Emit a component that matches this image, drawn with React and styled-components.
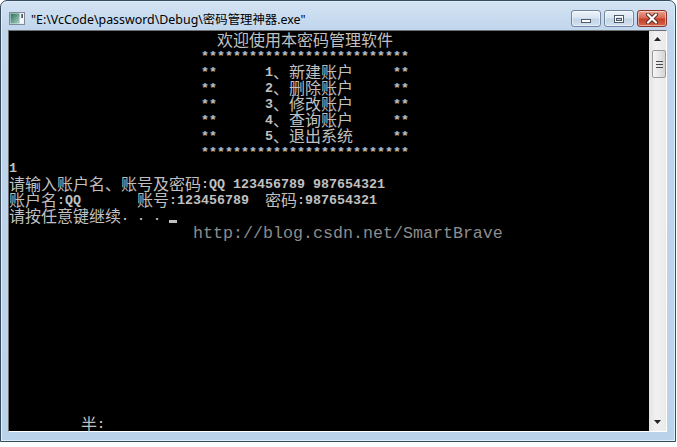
import React from 'react';
import styled, { createGlobalStyle } from 'styled-components';

const GlobalStyle = createGlobalStyle`
    body {
        margin: 0;
        background: #fff;
    }
`;

const Window = styled.div`
    width: 676px;
    height: 442px;
    box-sizing: border-box;
    border: 1px solid #3b4b5e;
    border-radius: 7px 7px 0 0;
    background: linear-gradient(to bottom, #d4e3f3 0, #bfd5ec 30px, #bad2ea 100%);
    box-shadow: inset 0 0 0 1px #d9f1fb;
    display: flex;
    flex-direction: column;
`;

const TitleBar = styled.div`
    height: 29px;
    box-sizing: border-box;
    padding: 9px 8px 0 8px;
    display: flex;
    align-items: flex-start;
    justify-content: space-between;
`;

const TitleGroup = styled.div`
    height: 17px;
    display: flex;
    align-items: center;
    gap: 6px;
`;

const TitleText = styled.span`
    font-family: "Noto Sans", "Noto Sans CJK SC", sans-serif;
    font-size: 12.4px;
    color: #000;
    white-space: pre;
`;

const Buttons = styled.div`
    display: flex;
    gap: 3px;
`;

const CaptionButton = styled.div`
    width: 30px;
    height: 17px;
    box-sizing: border-box;
    border: 1px solid ${p => (p.$close ? '#8d3428' : '#72869f')};
    border-radius: 3px;
    background: ${p => (p.$close
        ? 'linear-gradient(to bottom, #e9a291 0, #d86a55 45%, #c63f2c 55%, #d4654c 100%)'
        : 'linear-gradient(to bottom, #eef4fa 0, #d9e5f2 45%, #c3d4e8 55%, #d3e1f0 100%)')};
    box-shadow: inset 0 0 0 1px rgba(255, 255, 255, 0.45);
    display: flex;
    align-items: center;
    justify-content: center;
`;

const Client = styled.div`
    margin: 0 8px 0 7px;
    border-top: 1px solid #6f6f6f;
    border-left: 1px solid #6f6f6f;
    border-bottom: 1px solid #fff;
    border-right: 1px solid #fff;
    display: flex;
`;

const Console = styled.div`
    position: relative;
    width: 640px;
    height: 400px;
    background: #000;
    color: #c0c0c0;
`;

const Row = styled.div`
    height: 16px;
    line-height: 16px;
    white-space: pre;
    display: flex;
    align-items: flex-start;
`;

// half-width runs sit 3px lower so both fonts share the console baseline
const Run = styled.span`
    display: inline-block;
    box-sizing: border-box;
    height: 16px;
    line-height: ${p => (p.$wide ? 16 : 13)}px;
    padding-top: ${p => (p.$wide ? 0 : 3)}px;
    font-family: ${p => (p.$wide ? '"Noto Sans CJK SC", sans-serif' : '"Liberation Mono", monospace')};
    font-size: ${p => (p.$wide ? '16px' : '13.334px')};
    font-weight: ${p => (p.$wide ? 400 : 700)};
`;

const Cursor = styled.span`
    display: inline-block;
    width: 8px;
    height: 16px;
    box-shadow: inset 0 -3px 0 #c0c0c0;
`;

const Watermark = styled.div`
    position: absolute;
    left: 184px;
    top: 193px;
    font-family: "Liberation Mono", monospace;
    font-size: 16.67px;
    color: #8c8c8c;
    white-space: pre;
`;

const ScrollBar = styled.div`
    width: 17px;
    height: 400px;
    background: linear-gradient(to right, #e4e4e4, #f1f1f1 40%, #eaeaea);
    display: flex;
    flex-direction: column;
    justify-content: space-between;
`;

const ArrowButton = styled.div`
    height: 17px;
    display: flex;
    align-items: center;
    justify-content: center;
`;

const ThumbTrack = styled.div`
    flex: 1;
    padding: 2px 1px 0 3px;
`;

const Thumb = styled.div`
    width: 14px;
    height: 28px;
    box-sizing: border-box;
    border: 1px solid #9a9a9a;
    border-radius: 2px;
    background: linear-gradient(to right, #f6f6f6, #e6e6e6 50%, #d4d4d4);
    display: flex;
    flex-direction: column;
    align-items: center;
    justify-content: center;
    gap: 2px;
`;

const Grip = styled.div`
    width: 7px;
    height: 1px;
    background: #4a4a4a;
`;

const lines = [
    '                          欢迎使用本密码管理软件',
    '                        **************************',
    '                        **      1、新建账户     **',
    '                        **      2、删除账户     **',
    '                        **      3、修改账户     **',
    '                        **      4、查询账户     **',
    '                        **      5、退出系统     **',
    '                        **************************',
    '1',
    '请输入账户名、账号及密码:QQ 123456789 987654321',
    '账户名:QQ       账号:123456789  密码:987654321',
    '请按任意键继续. . . ',
];

const CURSOR_ROW = 11;

// split a line into runs of half-width and full-width characters
const toRuns = text => {
    const runs = [];
    for (const ch of text) {
        const wide = ch.charCodeAt(0) >= 0x2e80;
        const last = runs[runs.length - 1];
        if (last && last.wide === wide) last.text += ch;
        else runs.push({ wide, text: ch });
    }
    return runs;
};

const rows = [...lines];
while (rows.length < 24) rows.push('');
rows.push('         半:');

const ConsoleIcon = () => (
    <svg width="16" height="13" viewBox="0 0 16 13">
        <defs>
            <linearGradient id="ci" x1="0" y1="0" x2="1" y2="1">
                <stop offset="0" stopColor="#2c6e57" />
                <stop offset="1" stopColor="#a9d4c8" />
            </linearGradient>
        </defs>
        <rect x="0.5" y="0.5" width="15" height="12" fill="#dfe7ee" stroke="#7d8b99" />
        <rect x="1.5" y="1.5" width="9" height="10" fill="url(#ci)" />
        <rect x="11" y="1.5" width="4" height="10" fill="#f4f7f9" />
        <rect x="12.5" y="2" width="1.2" height="4" fill="#111" />
    </svg>
);

const Minimize = () => (
    <svg width="12" height="10" viewBox="0 0 12 10">
        <rect x="1.5" y="5.5" width="9" height="3" fill="#fff" stroke="#4d5a6a" />
    </svg>
);

const Maximize = () => (
    <svg width="12" height="10" viewBox="0 0 12 10">
        <rect x="1.5" y="1.5" width="9" height="7" fill="none" stroke="#4d5a6a" />
        <rect x="2.5" y="2.5" width="7" height="5" fill="none" stroke="#fff" />
        <rect x="3.5" y="4.5" width="5" height="2" fill="none" stroke="#4d5a6a" />
    </svg>
);

const Close = () => (
    <svg width="14" height="11" viewBox="0 0 14 11">
        <path d="M3 1.5 L11 9.5 M11 1.5 L3 9.5" stroke="#5a2a22" strokeWidth="4" strokeLinecap="round" />
        <path d="M3 1.5 L11 9.5 M11 1.5 L3 9.5" stroke="#fff" strokeWidth="2.2" strokeLinecap="round" />
    </svg>
);

const Arrow = ({ down }) => (
    <svg width="8" height="5" viewBox="0 0 8 5">
        {down
            ? <path d="M0 0 H7 L3.5 4 Z" fill="#222" />
            : <path d="M0 4 H7 L3.5 0 Z" fill="#222" />}
    </svg>
);

const App = () => {
    return (
        <>
            <GlobalStyle />
            <Window>
                <TitleBar>
                    <TitleGroup>
                        <ConsoleIcon />
                        <TitleText>"E:\VcCode\password\Debug\密码管理神器.exe"</TitleText>
                    </TitleGroup>
                    <Buttons>
                        <CaptionButton><Minimize /></CaptionButton>
                        <CaptionButton><Maximize /></CaptionButton>
                        <CaptionButton $close><Close /></CaptionButton>
                    </Buttons>
                </TitleBar>
                <Client>
                    <Console>
                        {rows.map((line, i) => (
                            <Row key={i}>
                                {toRuns(line).map((run, j) => (
                                    <Run key={j} $wide={run.wide}>{run.text}</Run>
                                ))}
                                {i === CURSOR_ROW && <Cursor />}
                            </Row>
                        ))}
                        <Watermark>http://blog.csdn.net/SmartBrave</Watermark>
                    </Console>
                    <ScrollBar>
                        <ArrowButton><Arrow /></ArrowButton>
                        <ThumbTrack>
                            <Thumb>
                                <Grip />
                                <Grip />
                                <Grip />
                            </Thumb>
                        </ThumbTrack>
                        <ArrowButton><Arrow down /></ArrowButton>
                    </ScrollBar>
                </Client>
            </Window>
        </>
    );
};

export default App;
